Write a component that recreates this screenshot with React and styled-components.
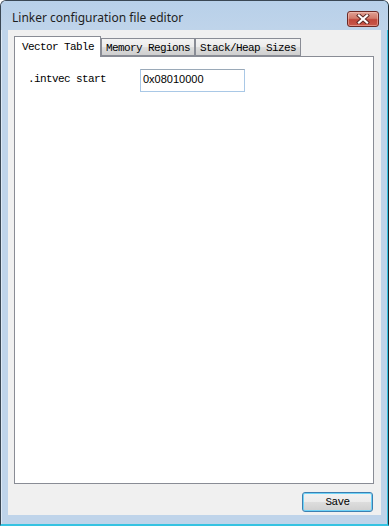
import React from "react";
import styled, { createGlobalStyle } from "styled-components";

const GlobalStyle = createGlobalStyle`
  html, body {
    margin: 0;
    padding: 0;
    background: #ffffff;
  }
  #root {
    width: 389px;
    height: 526px;
  }
`;

const Window = styled.div`
  box-sizing: border-box;
  width: 389px;
  height: 526px;
  display: flex;
  flex-direction: column;
  background: #bfd4ea;
  border: 1px solid #3a4754;
  border-right-color: #1e2a33;
  border-bottom: 2px solid #35c3e2;
  border-radius: 6px 6px 0 0;
  box-shadow: inset -1px 0 0 #35c3e2, inset 1px 1px 0 #dce8f5;
`;

const TitleBar = styled.div`
  height: 29px;
  flex: none;
  display: flex;
  align-items: flex-end;
  justify-content: space-between;
  padding: 0 9px 3px 11px;
  box-sizing: border-box;
  background: linear-gradient(#b8d0e9, #bfd4ea);
  border-radius: 5px 5px 0 0;
`;

const Title = styled.div`
  font-family: "Noto Sans", "Liberation Sans", sans-serif;
  font-size: 12px;
  line-height: 17px;
  color: #1e1e1e;
  margin-bottom: 1px;
`;

const CloseButton = styled.div`
  width: 32px;
  height: 16px;
  box-sizing: border-box;
  border: 1px solid #6b2a26;
  border-radius: 3px;
  background: linear-gradient(#e0a195 0%, #d27a6a 45%, #c0473a 55%, #c9584a 100%);
  box-shadow: inset 0 0 0 1px rgba(255, 210, 200, 0.45);
  display: flex;
  align-items: center;
  justify-content: center;
`;

const Client = styled.div`
  flex: 1;
  margin: 0 7px 9px 7px;
  padding: 6px 7px 3px 6px;
  background: #f0f0f0;
  display: flex;
  flex-direction: column;
`;

const TabStrip = styled.div`
  display: flex;
  align-items: flex-end;
  height: 20px;
  position: relative;
  z-index: 1;
`;

const Tab = styled.div`
  box-sizing: border-box;
  height: ${(p) => (p.active ? "21px" : "18px")};
  margin-bottom: ${(p) => (p.active ? "-1px" : "0")};
  padding: ${(p) => (p.active ? "3px 6px 0 7px" : "2px 4px 0 4px")};
  border: 1px solid #898c95;
  border-bottom: ${(p) => (p.active ? "none" : "1px solid #898c95")};
  background: ${(p) =>
    p.active ? "#ffffff" : "linear-gradient(#f3f3f3 0%, #ebebeb 50%, #dddddd 52%, #cfcfcf 100%)"};
  font-family: "Liberation Mono", "DejaVu Sans Mono", monospace;
  font-size: 11px;
  letter-spacing: -0.6px;
  line-height: 14px;
  color: #000;
  white-space: nowrap;
`;

const Pane = styled.div`
  flex: 1;
  background: #ffffff;
  border: 1px solid #898c95;
  padding: 12px 13px;
`;

const FieldRow = styled.div`
  display: grid;
  grid-template-columns: 112px 105px;
  align-items: center;
`;

const Label = styled.div`
  font-family: "Liberation Mono", "DejaVu Sans Mono", monospace;
  font-size: 11px;
  letter-spacing: -0.6px;
  color: #000;
  padding-bottom: 3px;
`;

const TextBox = styled.input`
  box-sizing: border-box;
  width: 105px;
  height: 23px;
  padding: 0 0 3px 2px;
  margin: 0;
  border: 1px solid #a9c8e6;
  border-top-color: #9aa9b8;
  outline: none;
  background: #ffffff;
  font-family: "Liberation Sans", Arial, sans-serif;
  font-size: 11px;
  color: #000;
`;

const Footer = styled.div`
  display: flex;
  justify-content: flex-end;
  margin-top: 8px;
  padding-right: 1px;
`;

const Button = styled.button`
  box-sizing: border-box;
  width: 71px;
  height: 20px;
  padding: 0;
  border: 1px solid #3c7fb1;
  border-radius: 3px;
  background: linear-gradient(#f2f2f2 0%, #ebebeb 50%, #dddddd 51%, #cfcfcf 100%);
  box-shadow: inset 0 0 0 1px #6fd3f7;
  font-family: "Liberation Mono", "DejaVu Sans Mono", monospace;
  font-size: 11px;
  letter-spacing: -0.6px;
  color: #000;
`;

const CloseIcon = () => (
  <svg width="14" height="10" viewBox="0 0 14 10">
    <path d="M3 1.5 L11 8.5 M11 1.5 L3 8.5" stroke="#5a2622" strokeWidth="4" strokeLinecap="square" />
    <path d="M3 1.5 L11 8.5 M11 1.5 L3 8.5" stroke="#ffffff" strokeWidth="2.2" strokeLinecap="square" />
  </svg>
);

const tabs = ["Vector Table", "Memory Regions", "Stack/Heap Sizes"];

export default function App() {
  return (
    <>
      <GlobalStyle />
      <Window>
        <TitleBar>
          <Title>Linker configuration file editor</Title>
          <CloseButton>
            <CloseIcon />
          </CloseButton>
        </TitleBar>
        <Client>
          <TabStrip>
            {tabs.map((t, i) => (
              <Tab key={t} active={i === 0}>
                {t}
              </Tab>
            ))}
          </TabStrip>
          <Pane>
            <FieldRow>
              <Label>.intvec start</Label>
              <TextBox defaultValue="0x08010000" />
            </FieldRow>
          </Pane>
          <Footer>
            <Button>Save</Button>
          </Footer>
        </Client>
      </Window>
    </>
  );
}
